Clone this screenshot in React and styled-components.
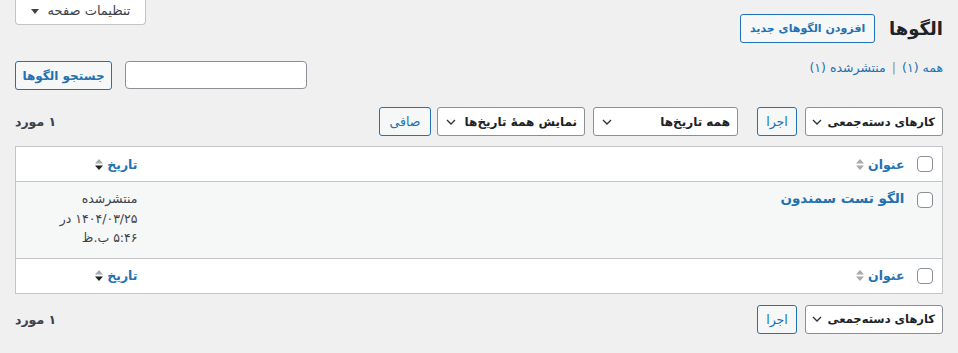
import React from "react";
import styled, { createGlobalStyle } from "styled-components";

const GlobalStyle = createGlobalStyle`
  body {
    margin: 0;
    background: #f0f0f1;
    color: #3c434a;
    font-family: "DejaVu Sans", "Noto Sans", sans-serif;
    font-size: 13px;
  }
  * { box-sizing: border-box; }
`;

const Page = styled.div`
  direction: rtl;
  width: 958px;
`;

const ScreenMeta = styled.div`
  display: flex;
  justify-content: flex-end;
  padding-left: 15px;
`;

const ScreenOptions = styled.button`
  display: flex;
  align-items: center;
  gap: 9px;
  justify-content: center;
  width: 131px;
  height: 26px;
  margin-top: -1px;
  background: #fff;
  border: 1px solid #c3c4c7;
  border-top: none;
  border-radius: 0 0 4px 4px;
  color: #3c434a;
  font: inherit;
  font-size: 13px;
  padding: 0 10px 2px;
`;

const Caret = styled.span`
  width: 0;
  height: 0;
  border-left: 4px solid transparent;
  border-right: 4px solid transparent;
  border-top: 5px solid #3c434a;
  margin-top: 2px;
`;

const Wrap = styled.div`
  padding: 0 15px;
`;

const TitleRow = styled.div`
  display: flex;
  align-items: center;
  gap: 14px;
  margin-top: -13px;
  height: 32px;
`;

const Title = styled.h1`
  margin: 0 0 0 0;
  font-size: 18px;
  font-weight: 700;
  color: #1d2327;
`;

const Button = styled.button`
  height: ${(p) => p.$h || 29}px;
  width: ${(p) => (p.$w ? `${p.$w}px` : "auto")};
  padding: 0 ${(p) => p.$px ?? 10}px;
  background: #f6f7f7;
  border: 1px solid #2271b1;
  border-radius: 3px;
  color: #2271b1;
  font: inherit;
  font-size: ${(p) => p.$size || 12.5}px;
  font-weight: ${(p) => (p.$bold ? 600 : 400)};
  white-space: nowrap;
`;

const FilterRow = styled.div`
  display: flex;
  justify-content: space-between;
  align-items: flex-start;
  margin-top: 17px;
`;

const SubSub = styled.div`
  display: flex;
  align-items: center;
  gap: 6px;
  color: #50575e;
  font-size: 12.5px;
  margin-top: -1px;
`;

const Link = styled.a`
  color: #2271b1;
  text-decoration: none;
  font-weight: ${(p) => (p.$bold ? 600 : 400)};
  font-size: ${(p) => p.$size || 12.5}px;
`;

const Sep = styled.span`
  color: #8c8f94;
`;

const SearchBox = styled.div`
  display: flex;
  gap: 13px;
`;

const Input = styled.input`
  width: 182px;
  height: 28px;
  border: 1px solid #8c8f94;
  border-radius: 4px;
  background: #fff;
`;

const TableNav = styled.div`
  display: flex;
  justify-content: space-between;
  align-items: center;
  height: 29px;
  margin: ${(p) => p.$m};
`;

const Actions = styled.div`
  display: flex;
  align-items: center;
`;

const Select = styled.div`
  display: flex;
  align-items: center;
  justify-content: space-between;
  gap: 6px;
  width: ${(p) => p.$w}px;
  height: 29px;
  margin-left: ${(p) => p.$gap || 0}px;
  padding: 0 7px 0 8px;
  background: #fff;
  border: 1px solid #8c8f94;
  border-radius: 3px;
  color: #1d2327;
  font-weight: 600;
  font-size: ${(p) => p.$size || 12}px;
  white-space: nowrap;
`;

const Count = styled.span`
  color: #3c434a;
  font-size: 12.5px;
  font-weight: 600;
`;

const Chevron = () => (
  <svg width="10" height="6" viewBox="0 0 10 6" style={{ flexShrink: 0 }}>
    <path d="M1 1l4 4 4-4" fill="none" stroke="#2c3338" strokeWidth="1.3" />
  </svg>
);

const Table = styled.table`
  width: 100%;
  border-collapse: collapse;
  border: 1px solid #c3c4c7;
  background: #fff;
`;

const Th = styled.th`
  text-align: right;
  font-weight: 400;
  height: 35px;
  padding: 0 8px;
  width: ${(p) => p.$w || "auto"};
  border-bottom: ${(p) => (p.$foot ? "none" : "1px solid #c3c4c7")};
  border-top: ${(p) => (p.$foot ? "1px solid #c3c4c7" : "none")};
`;

const CheckTh = styled(Th)`
  padding: 0 9px 0 0;
`;

const Row = styled.tr`
  background: #f6f7f7;
`;

const Td = styled.td`
  vertical-align: top;
  padding: 7px 8px 10px;
  height: 76px;
  line-height: 19.5px;
  font-size: 12.5px;
  color: #3c434a;
`;

const CheckTd = styled.td`
  vertical-align: top;
  padding: 10px 9px 0 0;
`;

const Check = styled.span`
  display: block;
  width: 16px;
  height: 16px;
  border: 1px solid #8c8f94;
  border-radius: 4px;
  background: #fff;
`;

const SortLink = styled.a`
  display: inline-flex;
  align-items: center;
  gap: 4px;
  color: #2271b1;
  text-decoration: none;
  font-weight: 600;
  font-size: 12.5px;
`;

const SortIcon = ({ desc }) => (
  <svg width="8" height="11" viewBox="0 0 8 11">
    <path d="M0 4.5L4 0l4 4.5z" fill="#a7aaad" />
    <path d="M0 6.5L4 11l4-4.5z" fill={desc ? "#1d2327" : "#a7aaad"} />
  </svg>
);

const HeadRow = ({ foot }) => (
  <tr>
    <CheckTh $w="30px" $foot={foot}>
      <Check />
    </CheckTh>
    <Th $foot={foot}>
      <SortLink>
        عنوان <SortIcon />
      </SortLink>
    </Th>
    <Th $w="130px" $foot={foot}>
      <SortLink>
        تاریخ <SortIcon desc />
      </SortLink>
    </Th>
  </tr>
);

export default function App() {
  return (
    <Page>
      <GlobalStyle />
      <ScreenMeta>
        <ScreenOptions>
          تنظیمات صفحه <Caret />
        </ScreenOptions>
      </ScreenMeta>
      <Wrap>
        <TitleRow>
          <Title>الگوها</Title>
          <Button $bold $size={11} $w={135} $px={0}>افزودن الگوهای جدید</Button>
        </TitleRow>

        <FilterRow>
          <SubSub>
            <Link>همه (۱)</Link>
            <Sep>|</Sep>
            <Link>منتشرشده (۱)</Link>
          </SubSub>
          <SearchBox>
            <Input />
            <Button $bold $w={97} $px={0} $size={12}>جستجو الگوها</Button>
          </SearchBox>
        </FilterRow>

        <TableNav $m="17px 0 10px">
          <Actions>
            <Select $w={138} $gap={8} $size={11.5}>
              کارهای دسته‌جمعی <Chevron />
            </Select>
            <Button $w={40} $px={0}>اجرا</Button>
            <Select $w={145} style={{ marginRight: 19 }} $gap={8}>
              همه تاریخ‌ها <Chevron />
            </Select>
            <Select $w={148} $gap={6}>
              نمایش همهٔ تاریخ‌ها <Chevron />
            </Select>
            <Button $w={52} $px={0}>صافی</Button>
          </Actions>
          <Count>۱ مورد</Count>
        </TableNav>

        <Table>
          <thead>
            <HeadRow />
          </thead>
          <tbody>
            <Row>
              <CheckTd>
                <Check />
              </CheckTd>
              <Td>
                <Link $bold $size={13.5}>الگو تست سمندون</Link>
              </Td>
              <Td>
                منتشرشده
                <br />
                ۱۴۰۴/۰۳/۲۵ در
                <br />
                ۵:۴۶ ب.ظ
              </Td>
            </Row>
          </tbody>
          <tfoot>
            <HeadRow foot />
          </tfoot>
        </Table>

        <TableNav $m="11px 0 0">
          <Actions>
            <Select $w={138} $gap={8} $size={11.5}>
              کارهای دسته‌جمعی <Chevron />
            </Select>
            <Button $w={40} $px={0}>اجرا</Button>
          </Actions>
          <Count>۱ مورد</Count>
        </TableNav>
      </Wrap>
    </Page>
  );
}
